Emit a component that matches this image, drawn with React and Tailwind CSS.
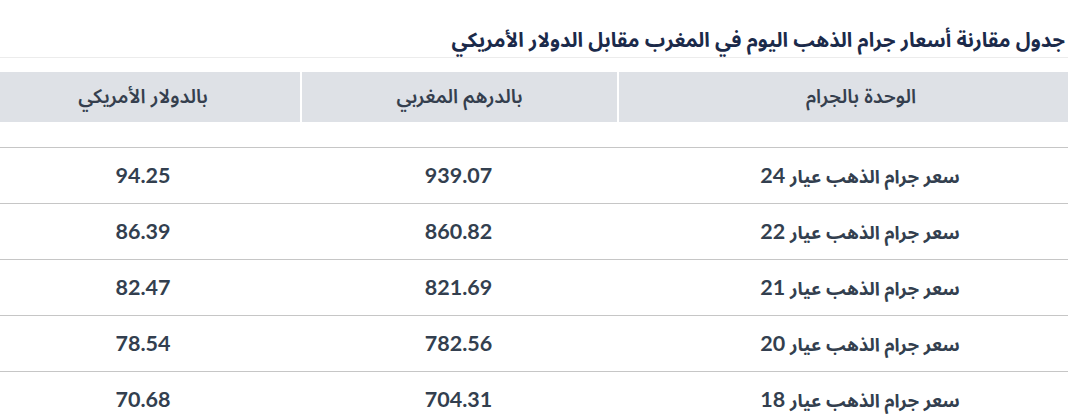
import React from "react";

const rows = [
  ["24", "939.07", "94.25"],
  ["22", "860.82", "86.39"],
  ["21", "821.69", "82.47"],
  ["20", "782.56", "78.54"],
  ["18", "704.31", "70.68"],
];

const AR = { fontFamily: '"Noto Sans Arabic", "Noto Sans", sans-serif' };
const NUM = { fontFamily: 'Lato, "Noto Sans", sans-serif' };

export default function App() {
  return (
    <div dir="rtl" className="w-[1068px] h-[415px] overflow-hidden bg-white" style={AR}>
      <div className="h-[58px] border-b border-[#ececec] pr-[3px] flex items-end pb-[6px]">
        <h2 className="text-[20.2px] font-bold text-[#1b2a4a] leading-none">
          جدول مقارنة أسعار جرام الذهب اليوم في المغرب مقابل الدولار الأمريكي
        </h2>
      </div>
      <div className="mt-[14px]">
        <div className="grid grid-cols-[451px_317px_300px] h-[50px] text-[19.5px] font-semibold text-[#353f4e]">
          <div className="bg-[#dee1e6] flex items-center justify-center pl-[35px] border-l-2 border-white">الوحدة بالجرام</div>
          <div className="bg-[#dee1e6] flex items-center justify-center border-l-2 border-white">بالدرهم المغربي</div>
          <div className="bg-[#dee1e6] flex items-center justify-center pr-[14px]">بالدولار الأمريكي</div>
        </div>
        <div className="h-[25px]" />
        {rows.map((r, i) => (
          <div
            key={i}
            className="grid grid-cols-[451px_317px_300px] h-[56px] border-t border-[#c6c6c6] font-bold text-[#333f4f]"
          >
            <div className="flex items-center justify-center pl-[35px] text-[18.4px]">
              <span>
                سعر جرام الذهب عيار <span className="text-[21.5px]" style={NUM}>{r[0]}</span>
              </span>
            </div>
            <div className="flex items-center justify-center text-[21.5px]" style={NUM}>{r[1]}</div>
            <div className="flex items-center justify-center pr-[14px] text-[21.5px]" style={NUM}>{r[2]}</div>
          </div>
        ))}
      </div>
    </div>
  );
}
